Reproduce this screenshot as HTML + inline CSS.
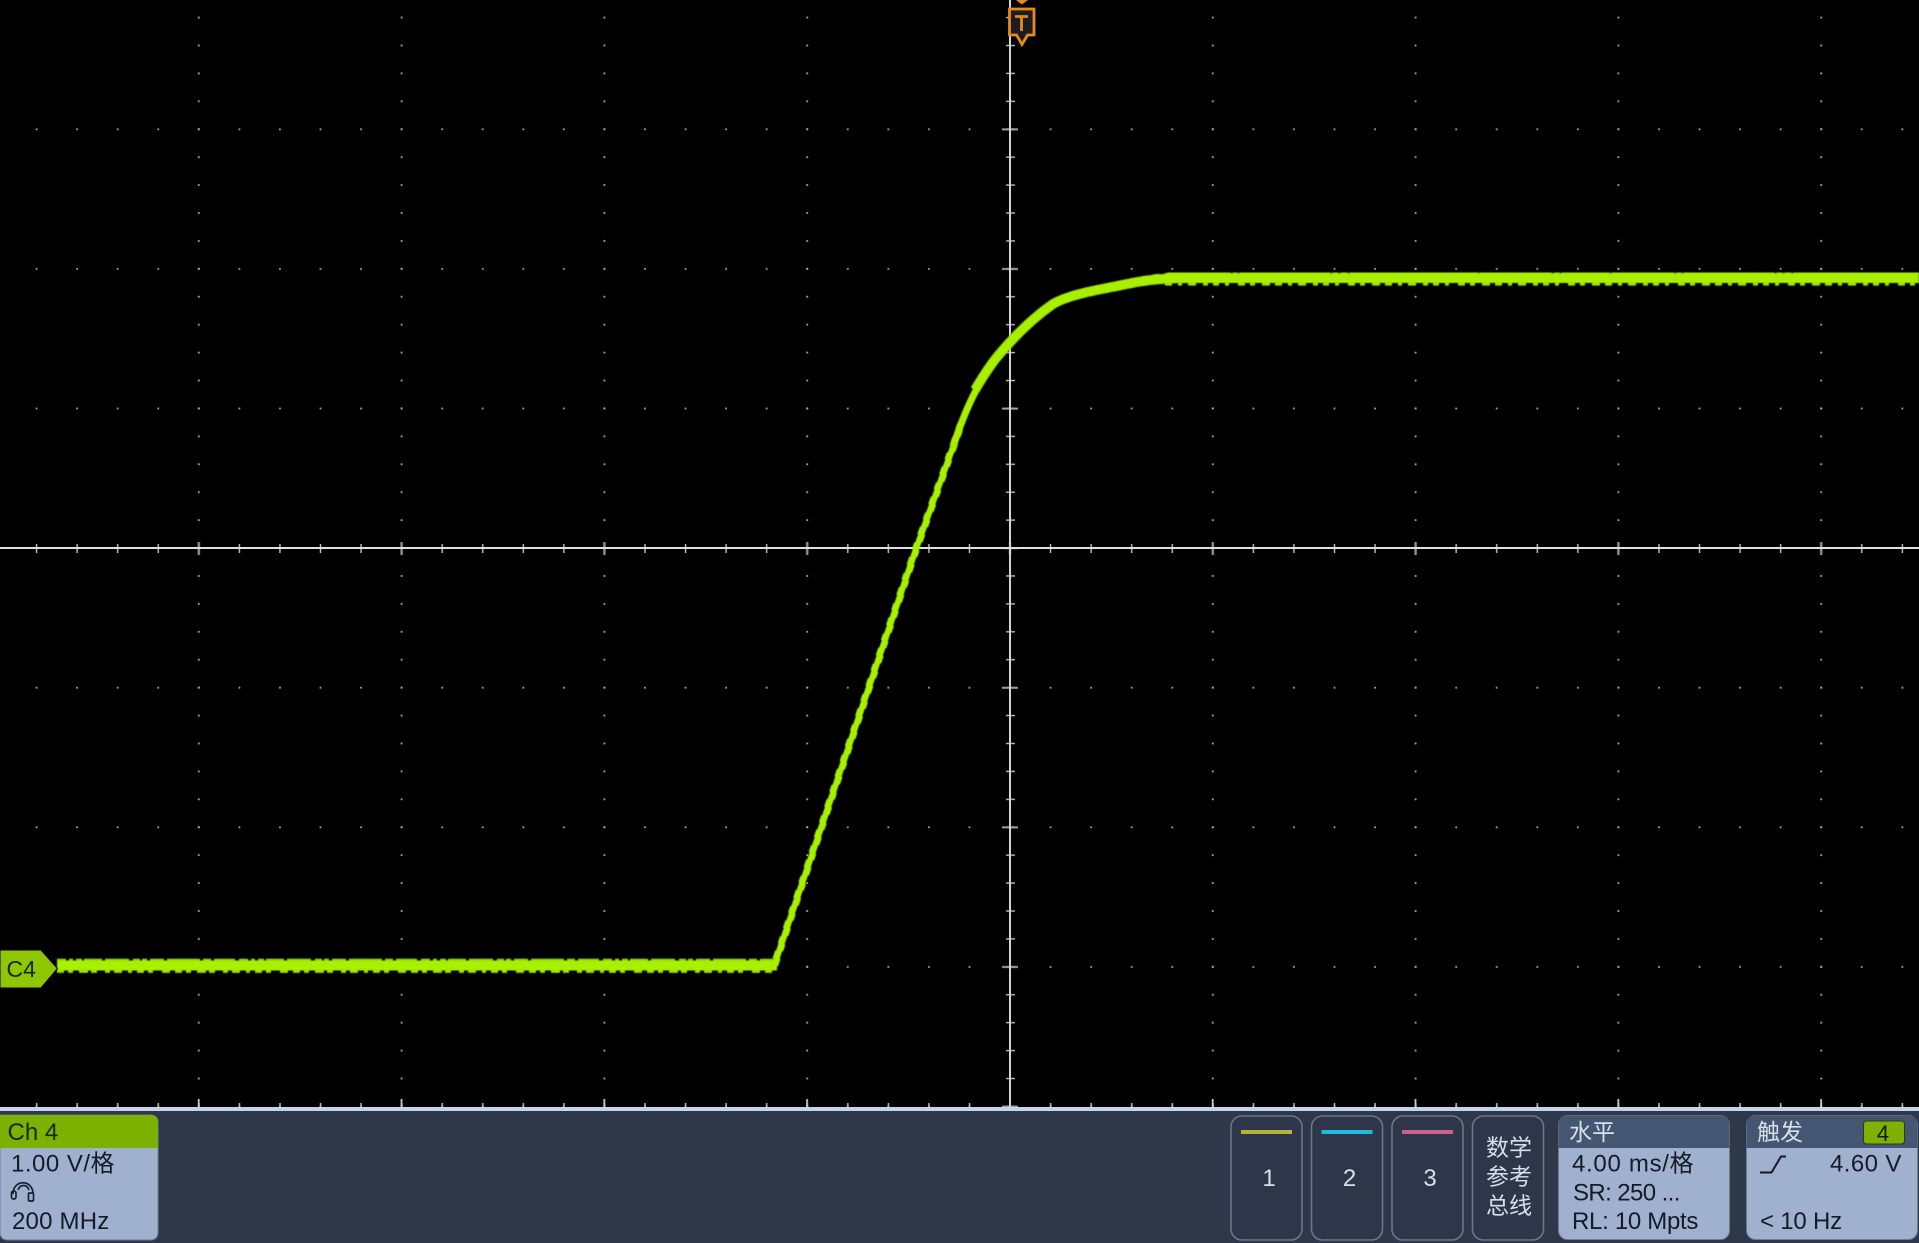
<!DOCTYPE html>
<html lang="zh">
<head>
<meta charset="utf-8">
<title>Oscilloscope</title>
<style>
html,body{margin:0;padding:0;background:#000;width:1919px;height:1243px;overflow:hidden}
svg{display:block;position:absolute;left:0;top:0}
text{font-family:"Liberation Sans","Noto Sans CJK SC",sans-serif}
</style>
</head>
<body>
<svg width="1919" height="1243" viewBox="0 0 1919 1243" xmlns="http://www.w3.org/2000/svg">
<defs>
<pattern id="p1" patternUnits="userSpaceOnUse" x="989.72" y="478.2" width="40.56" height="139.6"><rect x="19.4" y="69" width="1.8" height="1.8" fill="#a0a0a0"/></pattern>
<pattern id="p2" patternUnits="userSpaceOnUse" x="908.6" y="534.04" width="202.8" height="27.92"><rect x="100.5" y="13.1" width="1.8" height="1.8" fill="#a8a8a8"/></pattern>
<pattern id="hminor" patternUnits="userSpaceOnUse" x="989.72" y="543" width="40.56" height="11"><rect x="19.6" y="1" width="1.4" height="9" fill="#c4c4c4"/></pattern>
<pattern id="hmajor" patternUnits="userSpaceOnUse" x="908.6" y="541" width="202.8" height="15"><rect x="100.2" y="1" width="2.4" height="13" fill="#8e8e8e"/></pattern>
<pattern id="vminor" patternUnits="userSpaceOnUse" x="1004" y="534.04" width="14" height="27.92"><rect x="2" y="13.3" width="9" height="1.4" fill="#bcbcbc"/></pattern>
<pattern id="vmajor" patternUnits="userSpaceOnUse" x="1000" y="478.2" width="20" height="139.6"><rect x="2" y="69" width="16" height="2" fill="#a0a0a0"/></pattern>
<pattern id="bminor" patternUnits="userSpaceOnUse" x="989.72" y="1102" width="40.56" height="6"><rect x="19.6" y="1" width="1.5" height="4" fill="#bbb"/></pattern>
<pattern id="bmajor" patternUnits="userSpaceOnUse" x="908.6" y="1098" width="202.8" height="10"><rect x="100.4" y="1" width="1.8" height="8" fill="#c8c8c8"/></pattern>
<filter id="soft" x="-2%" y="-2%" width="104%" height="104%"><feGaussianBlur stdDeviation="0.45"/></filter>
</defs>

<rect width="1919" height="1243" fill="#000"/>

<!-- graticule -->
<rect width="1919" height="1107" fill="url(#p1)"/>
<rect width="1919" height="1107" fill="url(#p2)"/>
<rect x="0" y="543" width="1919" height="11" fill="url(#hminor)"/>
<rect x="0" y="541" width="1919" height="15" fill="url(#hmajor)"/>
<rect x="1004" y="0" width="14" height="1107" fill="url(#vminor)"/>
<rect x="1000" y="0" width="20" height="1107" fill="url(#vmajor)"/>
<rect x="0" y="1102" width="1919" height="6" fill="url(#bminor)"/>
<rect x="0" y="1098" width="1919" height="10" fill="url(#bmajor)"/>
<rect x="1009" y="0" width="2" height="1107" fill="#d4d4d4"/>
<rect x="0" y="547" width="1919" height="2" fill="#e0e0e0"/>

<!-- trace -->
<g filter="url(#soft)" fill="none" stroke-linejoin="round">
  <!-- rising edge -->
  <path d="M774 966L916 549L953 447" stroke="#a8f000" stroke-width="6"/>
  <path d="M776.6 966L918.6 549L955.6 447L964 423" stroke="#a8f000" stroke-width="3" stroke-dasharray="8 8 7 9"/>
  <path d="M771.4 966L913.4 549L950.4 447L959 423" stroke="#a8f000" stroke-width="3" stroke-dasharray="7 9 8 8" stroke-dashoffset="8"/>
  <!-- knee -->
  <path d="M953 447C965 410 978 382 997 357" stroke="#a8f000" stroke-width="7"/>
  <path d="M975 390C982 378 989 367 997 357C1012 339 1030 320 1053 304C1070 294 1098 290 1127 284C1145 280 1165 278 1190 278" stroke="#86c800" stroke-width="10"/>
  <path d="M975 390C982 378 989 367 997 357C1012 339 1030 320 1053 304C1070 294 1098 290 1127 284C1145 280 1165 278 1190 278" stroke="#a8f000" stroke-width="8.4"/>
  <path d="M997 353.5C1012 335.5 1030 316.5 1053 300.5C1070 290.5 1098 286.5 1127 280.5C1140 278 1150 276 1160 275" stroke="#a8f000" stroke-width="2.6" stroke-dasharray="7 6 4 9 5 5"/>
  <path d="M997 360.5C1012 342.5 1030 323.5 1053 307.5C1070 297.5 1098 293.5 1127 287.5C1140 285 1150 283 1160 282" stroke="#a8f000" stroke-width="2.6" stroke-dasharray="5 8 6 4 9 7"/>

  <!-- low level -->
  <path d="M57 965.5H777" stroke="#a8f000" stroke-width="10"/>
  <path d="M57 959.8H775" stroke="#96dc00" stroke-width="2" stroke-dasharray="9 3 4 3 6 2 18 3 24 4 7 2 5 3 14 3 33 3 8 3 21 4"/>
  <path d="M57 971.4H775" stroke="#9be400" stroke-width="3" stroke-dasharray="7 4 5 6 9 3 6 8 5 4 8 6 4 5 7 4 5 9 8 5"/>

  <!-- high level -->
  <path d="M1165 277.7H1919" stroke="#a8f000" stroke-width="10.5"/>
  <path d="M1165 272.4H1919" stroke="#000" stroke-width="1.8" stroke-dasharray="3 62 3 4 3 90 3 5 3 6 3 128 2 71 4 4 3 47"/>
  <path d="M1165 283.9H1919" stroke="#9be400" stroke-width="3.4" stroke-dasharray="7 6 4 6 8 7 5 5 6 6 4 9 7 5 5 7 8 5"/>
</g>

<!-- C4 tag -->
<path d="M0 950H41L57.5 968.5L41 988H0Z" fill="#8ec600" stroke="#000" stroke-width="1"/>
<text x="6.5" y="977" font-size="23" fill="#1a2600">C4</text>

<!-- trigger marker -->
<path d="M1016 0H1028L1022 4.5Z" fill="#e8891c"/>
<path d="M1009.5 9H1034V35H1027.5L1022 44.5L1016.5 35H1009.5Z" fill="#1c1c22" stroke="#e8891c" stroke-width="2.8" stroke-linejoin="miter"/>
<path d="M1015 16.5H1028M1021.5 16.5V31" stroke="#e8891c" stroke-width="2.8" fill="none"/>

<!-- bottom bar -->
<rect x="0" y="1107" width="1919" height="4" fill="#c6d3ec"/>
<rect x="0" y="1111" width="1919" height="132" fill="#2f3849"/>

<!-- Ch 4 panel -->
<path d="M0 1115H150Q158 1115 158 1123V1232Q158 1240 150 1240H8Q0 1240 0 1232Z" fill="#a0b1d0" stroke="#6f7a8c" stroke-width="1"/>
<path d="M0 1148V1115H150Q158 1115 158 1123V1148Z" fill="#7cb100"/>
<text x="7.5" y="1140" font-size="24" fill="#1b2610">Ch 4</text>
<text x="11" y="1171.5" font-size="24" letter-spacing=".5" fill="#141a26">1.00 V/格</text>
<g fill="none" stroke="#1a2130" stroke-width="1.7">
  <path d="M13 1194C13 1179 33 1179 33 1194"/>
  <path d="M18 1190C20 1184 27 1184 29 1190"/>
  <rect x="11.5" y="1191" width="4.5" height="8" rx="2"/>
  <rect x="28.5" y="1193" width="5" height="8" rx="1"/>
</g>
<text x="12" y="1229" font-size="24" letter-spacing=".2" fill="#141a26">200 MHz</text>

<!-- buttons -->
<g fill="#2e3649" stroke="#6c7686" stroke-width="1.6">
  <rect x="1231" y="1116" width="71" height="124" rx="11"/>
  <rect x="1311.5" y="1116" width="71" height="124" rx="11"/>
  <rect x="1392" y="1116" width="71" height="124" rx="11"/>
  <rect x="1472.5" y="1116" width="71" height="124" rx="11"/>
</g>
<rect x="1241" y="1130" width="51" height="4" fill="#b4b43c"/>
<rect x="1321.5" y="1130" width="51" height="4" fill="#1cbcd8"/>
<rect x="1402" y="1130" width="51" height="4" fill="#cf5f8d"/>
<g font-size="24" fill="#d8dfe9" text-anchor="middle">
  <text x="1269" y="1186">1</text>
  <text x="1349.5" y="1186">2</text>
  <text x="1430" y="1186">3</text>
</g>
<g font-size="23" fill="#d8dfe9" text-anchor="middle">
  <text x="1509" y="1155.5">数学</text>
  <text x="1509" y="1184.5">参考</text>
  <text x="1509" y="1213.5">总线</text>
</g>

<!-- Horizontal panel -->
<rect x="1558.5" y="1115.5" width="171" height="124" rx="9" fill="#a0b1d0" stroke="#6f7a8c" stroke-width="1"/>
<path d="M1558.5 1148V1124.5Q1558.5 1115.5 1567.5 1115.5H1720.5Q1729.5 1115.5 1729.5 1124.5V1148Z" fill="#445672"/>
<text x="1569" y="1140" font-size="23" fill="#d8dfe9">水平</text>
<text x="1572" y="1171.5" font-size="24" letter-spacing=".7" fill="#141a26">4.00 ms/格</text>
<text x="1573" y="1200.5" font-size="24" letter-spacing="-.6" fill="#141a26">SR: 250 ...</text>
<text x="1572" y="1229" font-size="24" letter-spacing="-.3" fill="#141a26">RL: 10 Mpts</text>

<!-- Trigger panel -->
<rect x="1746.5" y="1115.5" width="171" height="124" rx="9" fill="#a0b1d0" stroke="#6f7a8c" stroke-width="1"/>
<path d="M1746.5 1148V1124.5Q1746.5 1115.5 1755.5 1115.5H1908.5Q1917.5 1115.5 1917.5 1124.5V1148Z" fill="#445672"/>
<text x="1757" y="1140" font-size="23" fill="#d8dfe9">触发</text>
<rect x="1863.5" y="1121" width="41" height="23" rx="3" fill="#7fb200" stroke="#2c3a22" stroke-width="1"/>
<text x="1883" y="1141" font-size="22" fill="#141a10" text-anchor="middle">4</text>
<path d="M1760 1172.5H1771.5L1781 1156.5H1786" fill="none" stroke="#141a26" stroke-width="2"/>
<text x="1830" y="1171.5" font-size="24" letter-spacing=".4" fill="#141a26">4.60 V</text>
<text x="1760" y="1229" font-size="24" letter-spacing="-.2" fill="#141a26">&lt; 10 Hz</text>
</svg>
</body>
</html>
